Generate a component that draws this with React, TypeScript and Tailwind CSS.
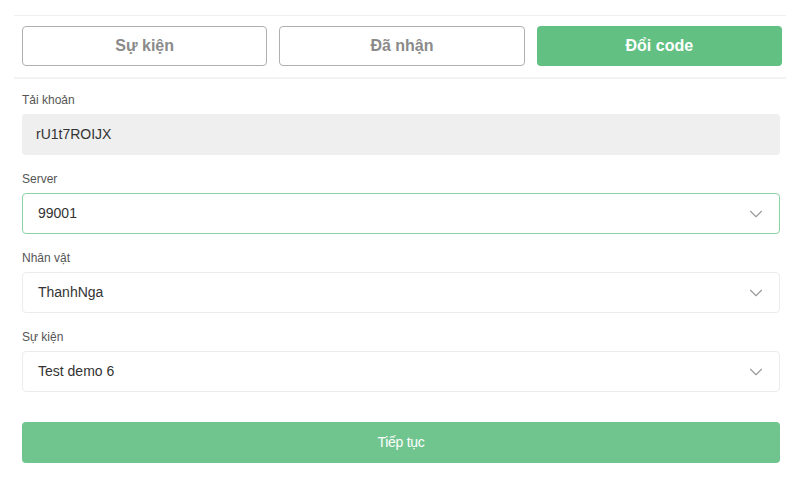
import { ChevronDown } from "lucide-react";

const tabs = [
    { label: "Sự kiện", active: false },
    { label: "Đã nhận", active: false },
    { label: "Đổi code", active: true },
];

function Select({ value, focused }: { value: string; focused?: boolean }) {
    return (
        <div
            className={`h-[41px] rounded-[4px] border bg-white flex items-center justify-between pl-[15px] pr-[12px] ${
                focused ? "border-[#8ad3a3]" : "border-[#ececec]"
            }`}
        >
            <span className="text-[14px] text-[#333]">{value}</span>
            <ChevronDown className="w-[22px] h-[22px] text-[#9a9a9a]" strokeWidth={1.2} />
        </div>
    );
}

function Field({ label, children }: { label: string; children: React.ReactNode }) {
    return (
        <div className="flex flex-col">
            <label className="text-[12px] text-[#555] leading-[14px] mb-[7px]">{label}</label>
            {children}
        </div>
    );
}

export default function App() {
    return (
        <div className="w-[800px] h-[480px] bg-white overflow-hidden" style={{ fontFamily: '"Liberation Sans", Arial, sans-serif' }}>
            <div className="pt-[15px] px-[14px]">
                <div className="border-t border-[#f0f0f0]" />
            </div>
            <div className="grid grid-cols-3 gap-[12px] pl-[22px] pr-[18px] pt-[10px] pb-[11px]">
                {tabs.map((t) => (
                    <div
                        key={t.label}
                        className={`h-[40px] rounded-[4px] flex items-center justify-center text-[16px] font-bold ${
                            t.active ? "bg-[#62c083] text-white" : "border border-[#b0b0b0] text-[#8a8a8a]"
                        }`}
                    >
                        {t.label}
                    </div>
                ))}
            </div>
            <div className="px-[14px]">
                <div className="border-t-2 border-[#f2f2f2]" />
            </div>
            <div className="pl-[22px] pr-[20px] pt-[14px] flex flex-col gap-[17px]">
                <Field label="Tải khoản">
                    <div className="h-[41px] rounded-[4px] bg-[#efefef] flex items-center pl-[14px] text-[14px] text-[#333]">
                        rU1t7ROIJX
                    </div>
                </Field>
                <Field label="Server">
                    <Select value="99001" focused />
                </Field>
                <Field label="Nhân vật">
                    <Select value="ThanhNga" />
                </Field>
                <Field label="Sự kiện">
                    <Select value="Test demo 6" />
                </Field>
                <button className="mt-[13px] h-[41px] rounded-[4px] bg-[#70c58f] text-white text-[14px] tracking-[-0.3px]">
                    Tiếp tục
                </button>
            </div>
        </div>
    );
}
